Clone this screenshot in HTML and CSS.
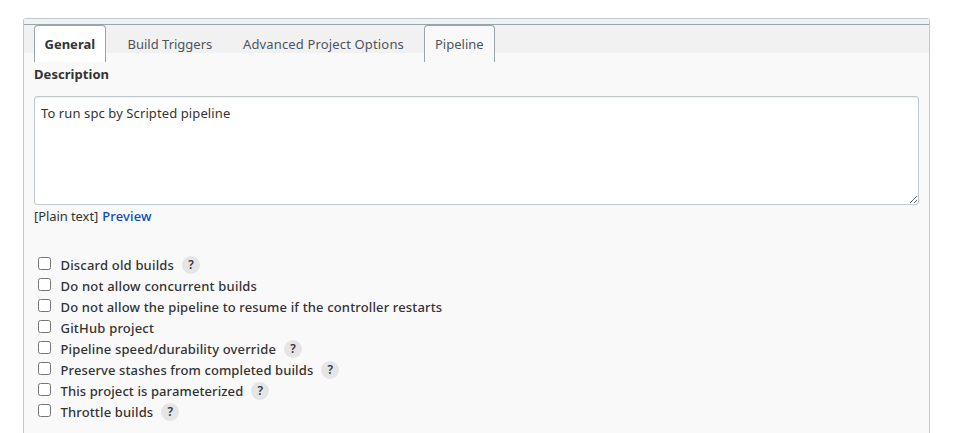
FILE: index.html
```html
<!DOCTYPE html>
<html lang="en">
<head>
<meta charset="utf-8">
<title>Pipeline configuration</title>
<link rel="stylesheet" href="styles.css">
</head>
<body>
<main class="panel">
  <div class="strip"></div>
  <nav class="tabs">
    <a class="tab general active">General</a>
    <a class="tab triggers">Build Triggers</a>
    <a class="tab advanced">Advanced Project Options</a>
    <a class="tab pipeline hover">Pipeline</a>
  </nav>
  <section class="content">
    <label class="heading"><span>Description</span></label>
    <textarea class="description">To run spc by Scripted pipeline</textarea>
    <div class="format"><span class="plain">[Plain text]</span><a class="preview">Preview</a></div>
    <div class="options">
      <div class="option"><input type="checkbox"><span class="label discard">Discard old builds</span><span class="help">?</span></div>
      <div class="option"><input type="checkbox"><span class="label concurrent">Do not allow concurrent builds</span></div>
      <div class="option"><input type="checkbox"><span class="label resume">Do not allow the pipeline to resume if the controller restarts</span></div>
      <div class="option"><input type="checkbox"><span class="label github">GitHub project</span></div>
      <div class="option"><input type="checkbox"><span class="label speed">Pipeline speed/durability override</span><span class="help">?</span></div>
      <div class="option"><input type="checkbox"><span class="label stashes">Preserve stashes from completed builds</span><span class="help">?</span></div>
      <div class="option"><input type="checkbox"><span class="label params">This project is parameterized</span><span class="help">?</span></div>
      <div class="option"><input type="checkbox"><span class="label throttle">Throttle builds</span><span class="help">?</span></div>
    </div>
  </section>
</main>
</body>
</html>
```
FILE: styles.css
```css
* { box-sizing: border-box; }
body {
  margin: 0;
  padding: 18px 27px 0 23px;
  height: 433px;
  background: #fff;
  color: #333;
  font: 13px/20px "Noto Sans", "Open Sans", sans-serif;
  white-space: nowrap;
}
.panel {
  height: 415px;
  border: 1px solid #bfc9cf;
  border-bottom: 0;
  border-radius: 3px 3px 0 0;
  background: #f9f9f9;
}
.strip { height: 6px; background: #f1f1f1; border-bottom: 1px solid #98a5ad; }
.tabs {
  display: flex;
  height: 28px;
  padding-left: 10px;
  background: #f1f1f1;
}
.tab {
  height: 37px;
  padding: 8px 0 0 10px;
  border: 1px solid transparent;
  border-bottom: 0;
  border-radius: 4px 4px 0 0;
  color: #4d545d;
}
.general { width: 72px; padding-left: 9.5px; }
.triggers { width: 116px; padding-left: 20.5px; }
.advanced { width: 202px; padding-left: 20px; letter-spacing: 0.15px; }
.pipeline { width: 71px; }
.tab.active { background: #fff; border-color: #98a5ad; color: #333; font-weight: 700; }
.tab.hover { background: #f9f9f9; border-color: #98a5ad; }
.content { padding: 11px 10px 0; }
.heading { display: block; height: 32px; font-weight: 700; letter-spacing: 0.05px; }
.description {
  display: block;
  width: 885px;
  height: 109px;
  padding: 6px;
  border: 1px solid #bfc9cf;
  border-radius: 3px;
  box-shadow: inset 0 1px 1px #0001;
  background: #fff;
  color: #333;
  font: inherit;
  letter-spacing: 0.1px;
  resize: vertical;
}
.format { display: flex; height: 50px; padding-top: 1px; gap: 4px; }
.plain { letter-spacing: -0.08px; }
.preview { color: #0b4bb3; font-weight: 500; letter-spacing: 0.15px; }
.option { display: flex; height: 21px; }
.option input { width: 13px; height: 13px; margin: 2px 9.5px 0 4px; }
.label { font-weight: 500; }
.discard { letter-spacing: 0.18px; }
.concurrent { letter-spacing: 0.2px; }
.resume { letter-spacing: 0.145px; }
.github { letter-spacing: 0.2px; }
.speed { letter-spacing: 0.16px; }
.stashes { letter-spacing: 0.11px; }
.params { letter-spacing: 0.1px; }
.throttle { letter-spacing: 0.15px; }
.help {
  width: 18px;
  height: 18px;
  margin: 1px 0 0 8px;
  border-radius: 50%;
  background: #e5e5e5;
  font-size: 12px;
  font-weight: 600;
  line-height: 18px;
  text-align: center;
}
```
